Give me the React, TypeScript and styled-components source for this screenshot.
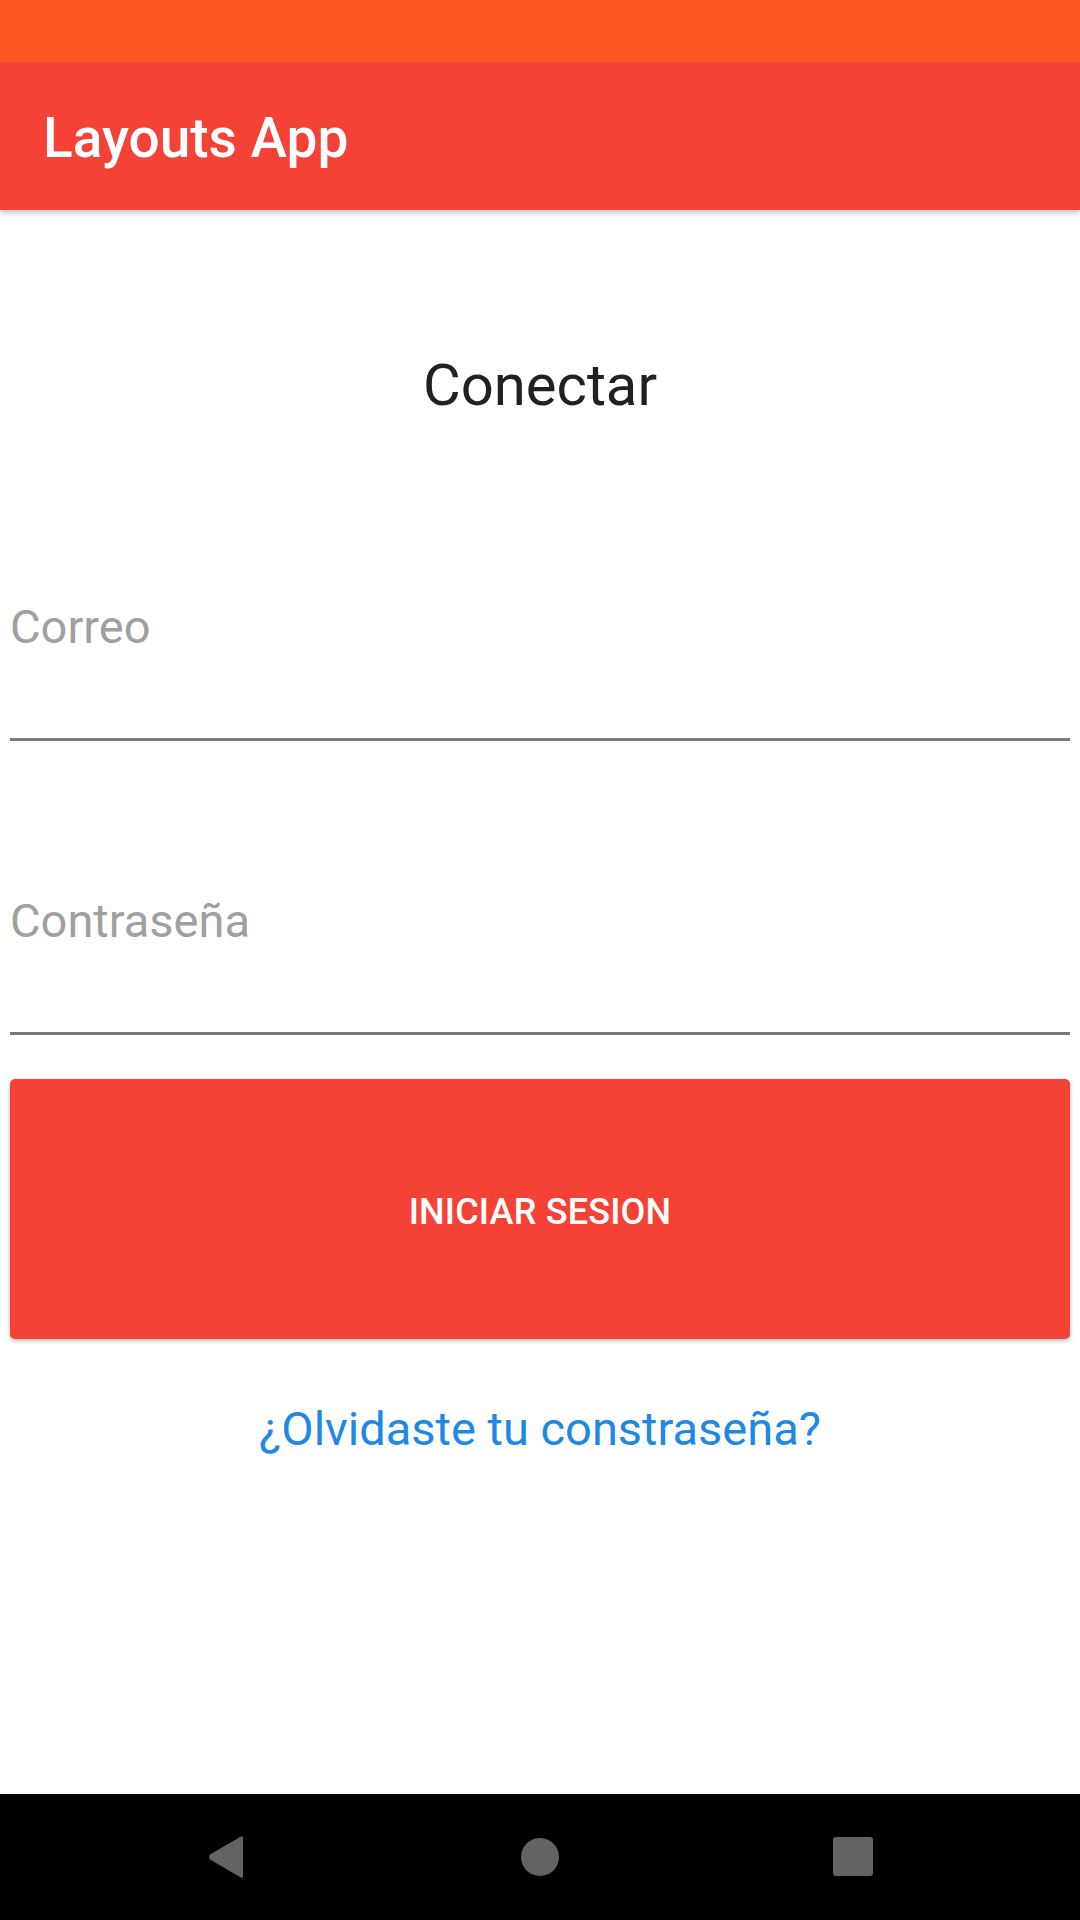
import React from 'react';
import styled, { createGlobalStyle } from 'styled-components';

const GlobalStyle = createGlobalStyle`
  html, body {
    margin: 0;
    padding: 0;
    background: #ffffff;
  }
  body {
    font-family: Roboto, "Noto Sans", "Liberation Sans", sans-serif;
  }
  * {
    box-sizing: border-box;
  }
`;

const Screen = styled.div`
  width: 1080px;
  height: 1920px;
  display: flex;
  flex-direction: column;
  background: #ffffff;
  overflow: hidden;
`;

const StatusBar = styled.div`
  height: 63px;
  background: #ff5722;
  flex-shrink: 0;
`;

const AppBar = styled.header`
  height: 147px;
  flex-shrink: 0;
  display: flex;
  align-items: center;
  padding: 4px 0 0 43px;
  background: #f44336;
  box-shadow: 0 3px 6px rgba(0, 0, 0, 0.22);
  position: relative;
  z-index: 1;
`;

const AppTitle = styled.h1`
  margin: 0;
  color: #ffffff;
  font-size: 55px;
  font-weight: 500;
  line-height: 1;
`;

const Content = styled.main`
  flex: 1;
  display: flex;
  flex-direction: column;
  padding: 0 10px;
`;

const Heading = styled.h2`
  margin: 146px 0 0;
  text-align: center;
  color: #212121;
  font-size: 58px;
  font-weight: 400;
  line-height: 1;
`;

const Field = styled.input<{ $gap: number }>`
  display: block;
  width: 100%;
  margin: ${p => p.$gap}px 0 0;
  height: 47px;
  box-sizing: content-box;
  padding: 0 0 88px;
  border: none;
  border-bottom: 3px solid #7a7a7a;
  outline: none;
  background: transparent;
  font-family: inherit;
  font-size: 47px;
  line-height: 47px;
  color: #212121;

  &::placeholder {
    color: #a0a0a0;
  }
`;

const LoginButton = styled.button`
  margin-top: 44px;
  height: 260px;
  width: 100%;
  padding: 6px 0 0;
  border: none;
  border-radius: 5px;
  background: #f44336;
  color: #ffffff;
  font-family: inherit;
  font-size: 36px;
  font-weight: 500;
  letter-spacing: 0.2px;
  text-transform: uppercase;
  box-shadow: 0 2px 4px rgba(0, 0, 0, 0.28);
  cursor: pointer;
`;

const ForgotLink = styled.a`
  margin-top: 66px;
  text-align: center;
  color: #1e88e5;
  font-size: 47px;
  line-height: 1;
  text-decoration: none;
`;

const NavBar = styled.nav`
  height: 126px;
  flex-shrink: 0;
  background: #000000;
  display: flex;
  align-items: center;
  justify-content: center;
  gap: 213px;
`;

const NavSlot = styled.div`
  width: 100px;
  display: flex;
  align-items: center;
  justify-content: center;
`;

const navGray = '#636363';

const BackIcon = () => (
  <svg width="40" height="44" viewBox="0 0 40 44">
    <path
      d="M36 3 L36 41 Q36 44 33.5 42.2 L3 24.5 Q1 22 3 19.5 L33.5 1.8 Q36 0 36 3 Z"
      fill={navGray}
    />
  </svg>
);

const HomeIcon = () => (
  <svg width="40" height="40" viewBox="0 0 40 40">
    <circle cx="20" cy="20" r="19" fill={navGray} />
  </svg>
);

const RecentsIcon = () => (
  <svg width="40" height="40" viewBox="0 0 40 40">
    <rect x="0" y="0" width="40" height="39" rx="3" fill={navGray} />
  </svg>
);

const App: React.FC = () => {
  return (
    <>
      <GlobalStyle />
      <Screen>
        <StatusBar />
        <AppBar>
          <AppTitle>Layouts App</AppTitle>
        </AppBar>
        <Content>
          <Heading>Conectar</Heading>
          <Field $gap={189} type="email" placeholder="Correo" />
          <Field $gap={156} type="password" placeholder="Contraseña" />
          <LoginButton>Iniciar Sesion</LoginButton>
          <ForgotLink href="#">¿Olvidaste tu constraseña?</ForgotLink>
        </Content>
        <NavBar>
          <NavSlot>
            <BackIcon />
          </NavSlot>
          <NavSlot>
            <HomeIcon />
          </NavSlot>
          <NavSlot>
            <RecentsIcon />
          </NavSlot>
        </NavBar>
      </Screen>
    </>
  );
};

export default App;
